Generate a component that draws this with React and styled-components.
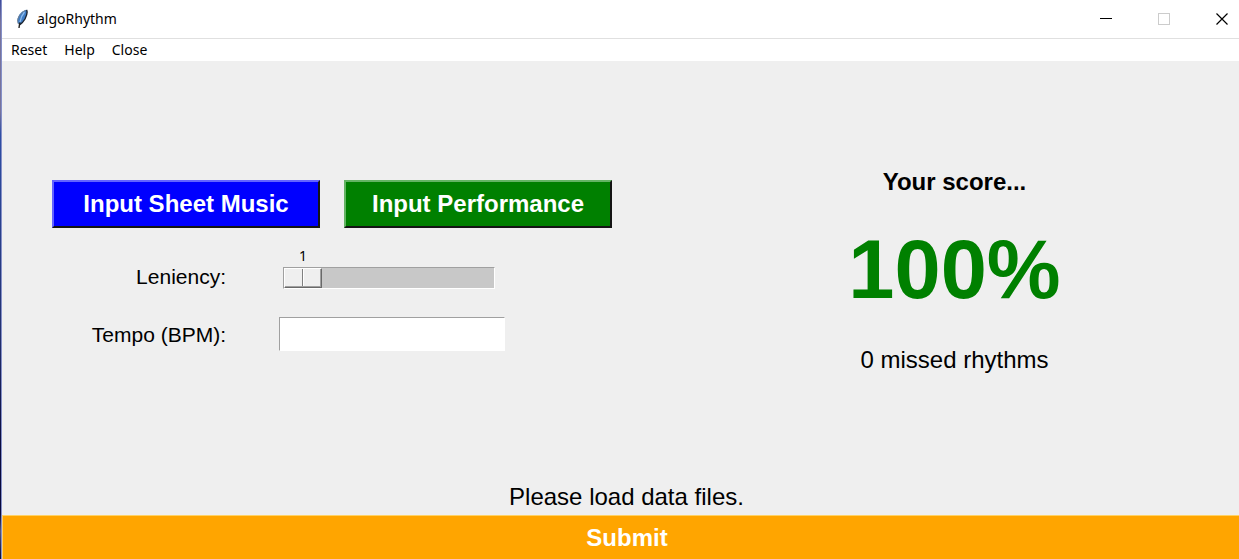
import React, { useState } from "react";
import styled, { createGlobalStyle } from "styled-components";

const GlobalStyle = createGlobalStyle`
  * { box-sizing: border-box; }
  body { margin: 0; background: #efefef; }
`;

const Desktop = styled.div`
  display: flex;
  min-height: 100vh;
  font-family: "Liberation Sans", Arial, sans-serif;
  color: #000;
`;

const Edge = styled.div`
  flex: 0 0 2px;
  border-right: 1px solid #8590c8;
  background: linear-gradient(#3c4a9c 0, #77739c 4%, #77739c 20%, #2f4fa5 24%, #23306e 60%, #0a0a3c 80%, #08083a 92%, #55557a 95%, #08083a 100%);
`;

const Window = styled.div`
  flex: 1;
  min-width: 0;
  display: flex;
  flex-direction: column;
  background: #efefef;
`;

const TitleBar = styled.header`
  display: flex;
  align-items: center;
  height: 39px;
  padding-left: 13px;
  background: #fff;
  border-bottom: 1px solid #e0e0e0;
`;

const Title = styled.h1`
  flex: 1;
  margin: 0 0 0 8px;
  font: 400 14px/20px "Noto Sans", "Open Sans", sans-serif;
`;

const WindowControls = styled.div`
  display: flex;
  gap: 24px;
`;

const ControlButton = styled.button`
  display: grid;
  place-items: center;
  width: 34px;
  height: 38px;
  margin: 0;
  padding: 0;
  border: 0;
  background: none;
  color: #000;
  &:disabled { color: #ccc; }
`;

const MenuBar = styled.nav`
  display: flex;
  height: 22px;
  padding-left: 9px;
  gap: 17px;
  background: #fff;
`;

const MenuItem = styled.button`
  padding: 0;
  border: 0;
  background: none;
  color: #000;
  font: 400 14px/22px "Noto Sans", "Open Sans", sans-serif;
`;

const Content = styled.main`
  flex: 1;
  display: grid;
  grid-template-columns: minmax(0, 668fr) minmax(0, 569fr);
`;

const Controls = styled.section`
  padding: 119px 0 0 50px;
`;

const ButtonRow = styled.div`
  display: flex;
  gap: 24px;
`;

const FileButton = styled.button`
  width: 268px;
  height: 48px;
  padding: 0;
  border: 2px solid;
  border-color: ${(p) => p.$light} #141414 #141414 ${(p) => p.$light};
  background: ${(p) => p.$color};
  color: #fff;
  font: 700 24px/28px "Liberation Sans", Arial, sans-serif;
`;

const Field = styled.div`
  display: grid;
  grid-template-columns: 174px 226px;
  column-gap: 53px;
  align-items: end;
  margin-top: ${(p) => p.$gap}px;
`;

const Label = styled.label`
  text-align: right;
  font-size: 21px;
  line-height: 24px;
  padding-bottom: ${(p) => p.$drop}px;
`;

const Scale = styled.div`
  padding-left: 4px;
`;

const ScaleValue = styled.output`
  display: block;
  width: 40px;
  text-align: center;
  font: 400 14px/18px "Noto Sans", "Open Sans", sans-serif;
`;

const Range = styled.input`
  display: block;
  appearance: none;
  width: 212px;
  height: 22px;
  margin: 2px 0 0;
  border: 1px solid;
  border-color: #a0a0a0 #fff #fff #a0a0a0;
  background: #c8c8c8;
  &::-webkit-slider-thumb {
    appearance: none;
    width: 38px;
    height: 20px;
    border: 1px solid;
    border-color: #fff #696969 #696969 #fff;
    box-shadow: inset -1px -1px #a0a0a0;
    background: linear-gradient(90deg, #efefef 17px, #808080 17px, #808080 18px, #fff 18px, #fff 19px, #efefef 19px);
  }
`;

const Entry = styled.input`
  width: 226px;
  height: 34px;
  padding: 0 4px;
  border: 1px solid;
  border-color: #a0a0a0 #fff #fff #a0a0a0;
  background: #fff;
  font: 400 21px/24px "Liberation Sans", Arial, sans-serif;
`;

const Score = styled.section`
  display: flex;
  flex-direction: column;
  align-items: center;
  padding-top: 107px;
`;

const ScoreTitle = styled.h2`
  margin: 0;
  font-size: 24px;
  line-height: 28px;
`;

const Percent = styled.strong`
  margin: 24px 0 26px;
  color: #008000;
  font-size: 83px;
  line-height: 100px;
`;

const Message = styled.p`
  margin: 0;
  text-align: center;
  font-size: 24px;
  line-height: 28px;
`;

const Status = styled(Message)`
  padding-left: 12px;
  margin-bottom: 4px;
`;

const Submit = styled.button`
  height: 44px;
  padding: 0 0 0 12px;
  border: 0;
  border-top: 1px solid #ffd264;
  border-left: 1px solid #ffd264;
  background: #ffa500;
  color: #fff;
  font: 700 24px/28px "Liberation Sans", Arial, sans-serif;
`;

const Feather = () => (
  <svg width="14" height="20" viewBox="0 0 14 20" aria-hidden="true">
    <path d="M11.500 .8C8 1.500 4 4.500 2.600 9.500C2.200 11.500 2.500 13.500 3.500 15L5.500 15.200C9 12.500 11.500 8 12.200 3Z" fill="#3f7cc4" />
    <path d="M11.500 1C12.800 3 11.500 7 10 10C8.500 12.500 7 14.500 5 15.500" fill="none" stroke="#1c2430" strokeWidth="1.400" />
    <path d="M10.500 1.500C6.500 3 3.500 7 2.700 11C2.500 13 3 14 3.500 15" fill="none" stroke="#6f7f90" />
    <path d="M9.500 3C7 6 5.500 9 5 13" fill="none" stroke="#8dbcec" strokeWidth="1.300" />
    <path d="M4.800 13.500L4 19" fill="none" stroke="#222" strokeWidth="1.400" />
  </svg>
);

export default function App() {
  const [leniency, setLeniency] = useState(1);
  const [tempo, setTempo] = useState("");
  const offset = ((leniency - 1) / 9) * 172;

  return (
    <Desktop>
      <GlobalStyle />
      <Edge />
      <Window>
        <TitleBar>
          <Feather />
          <Title>algoRhythm</Title>
          <WindowControls>
            <ControlButton aria-label="Minimize">
              <svg width="12" height="12" shapeRendering="crispEdges"><path d="M0 5.500H12" stroke="currentColor" /></svg>
            </ControlButton>
            <ControlButton aria-label="Maximize" disabled>
              <svg width="12" height="12" shapeRendering="crispEdges"><path d="M.5.5H11.500V11.500H.5Z" fill="none" stroke="currentColor" /></svg>
            </ControlButton>
            <ControlButton aria-label="Close window">
              <svg width="12" height="12"><path d="M.5.5L11.500 11.500M11.500.5L.5 11.500" stroke="currentColor" strokeWidth="1.200" /></svg>
            </ControlButton>
          </WindowControls>
        </TitleBar>
        <MenuBar>
          <MenuItem>Reset</MenuItem>
          <MenuItem>Help</MenuItem>
          <MenuItem>Close</MenuItem>
        </MenuBar>
        <Content>
          <Controls>
            <ButtonRow>
              <FileButton $color="#0000ff" $light="#6464ff">Input Sheet Music</FileButton>
              <FileButton $color="#008000" $light="#64b464">Input Performance</FileButton>
            </ButtonRow>
            <Field $gap={19}>
              <Label htmlFor="leniency" $drop={0}>Leniency:</Label>
              <Scale>
                <ScaleValue htmlFor="leniency" style={{ marginLeft: offset }}>{leniency}</ScaleValue>
                <Range
                  id="leniency"
                  type="range"
                  min="1"
                  max="10"
                  value={leniency}
                  onChange={(e) => setLeniency(Number(e.target.value))}
                />
              </Scale>
            </Field>
            <Field $gap={28}>
              <Label htmlFor="tempo" $drop={4}>Tempo (BPM):</Label>
              <Entry id="tempo" type="text" value={tempo} onChange={(e) => setTempo(e.target.value)} />
            </Field>
          </Controls>
          <Score>
            <ScoreTitle>Your score...</ScoreTitle>
            <Percent>100%</Percent>
            <Message>0 missed rhythms</Message>
          </Score>
        </Content>
        <Status>Please load data files.</Status>
        <Submit>Submit</Submit>
      </Window>
    </Desktop>
  );
}
